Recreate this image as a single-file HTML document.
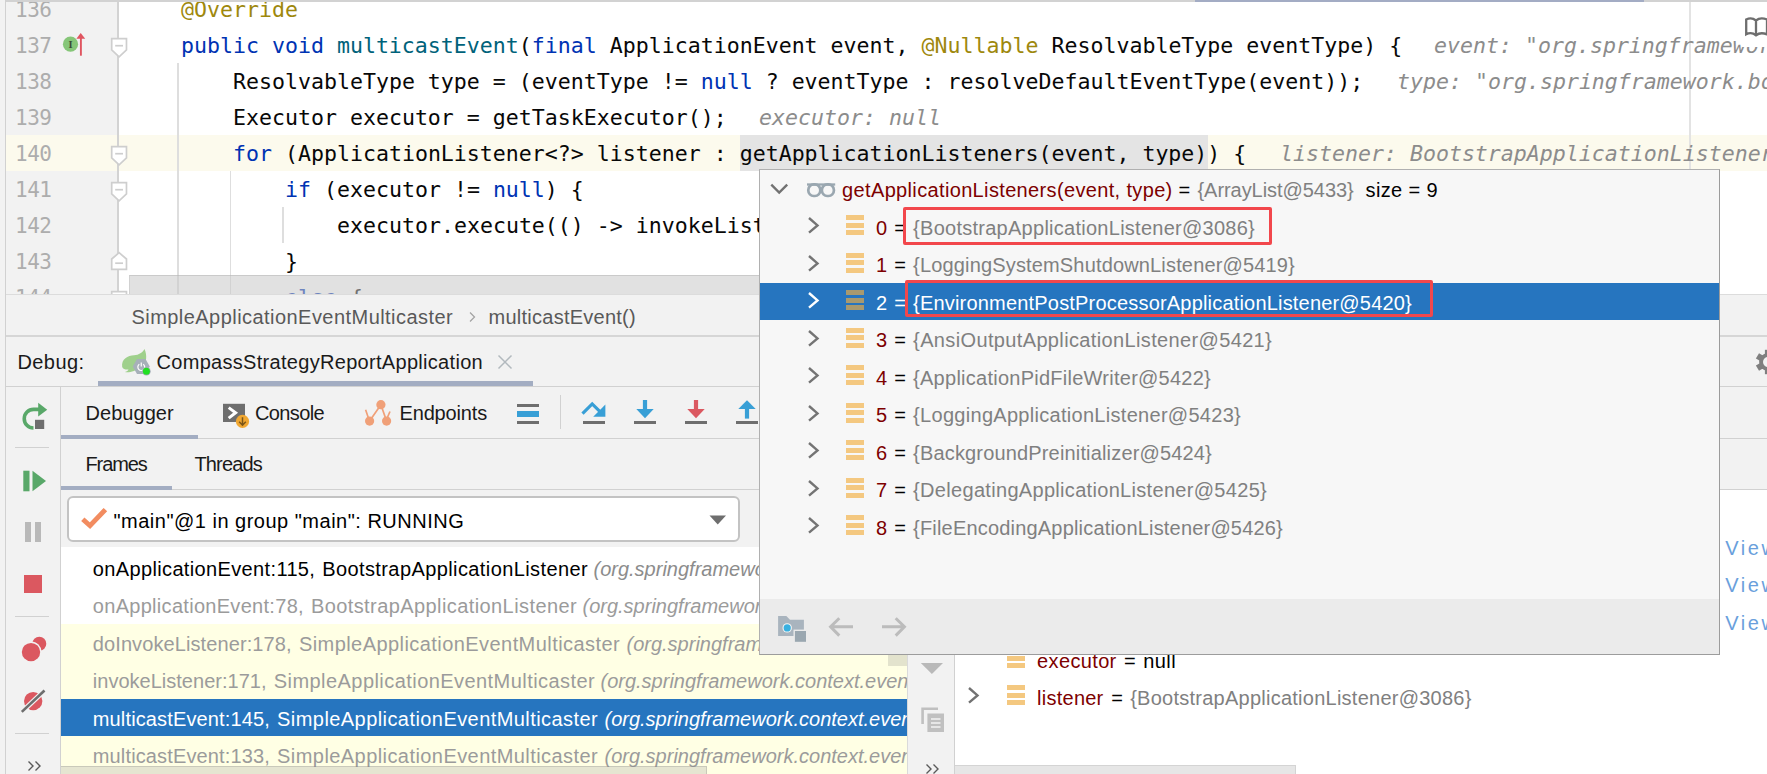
<!DOCTYPE html>
<html><head><meta charset="utf-8"><title>Debug</title>
<style>
html,body{margin:0;padding:0;}
body{width:1767px;height:774px;overflow:hidden;position:relative;background:#f2f2f2;font-family:"Liberation Sans",sans-serif;font-size:20px;color:#000;}
.abs{position:absolute;}
.mono{font-family:"DejaVu Sans Mono","Liberation Mono",monospace;font-size:21.59px;}
#editor{position:absolute;left:0;top:0;width:1767px;height:294px;background:#fff;overflow:hidden;}
.ln{position:absolute;left:0;width:1767px;height:36px;line-height:36px;white-space:pre;}
.ln .no{position:absolute;left:15px;color:#adadad;letter-spacing:-0.5px;font-size:21px;}
.ln .code{position:absolute;color:#080808;}
.ln .k{color:#0033b3;} .ln .m{color:#00627a;} .ln .a{color:#9e880d;} .ln .h{color:#8c8c8c;font-style:italic;}
.ui{position:absolute;white-space:pre;line-height:30px;height:30px;}
.clip{position:absolute;overflow:hidden;}
</style></head><body>
<div id="editor"><div class="abs" style="left:6px;top:0px;width:111px;height:294px;background:#f2f2f2;"></div>
<div class="abs" style="left:6px;top:135px;width:1761px;height:36px;background:#fcfaed;"></div>
<div class="abs" style="left:740px;top:135px;width:468px;height:36px;background:#e4e4e4;"></div>
<div class="abs" style="left:1689px;top:0px;width:2px;height:294px;background:#e3e3e3;"></div>
<div class="abs" style="left:177.3px;top:63px;width:1.5px;height:231px;background:#dedede;"></div>
<div class="abs" style="left:229.9px;top:171px;width:1.5px;height:123px;background:#dedede;"></div>
<div class="abs" style="left:282px;top:207px;width:1.5px;height:36px;background:#dedede;"></div>
<div class="mono">
<div class="ln" style="top:-8.3px"><span class="no">136</span><span class="code" style="left:181px"><span class="a">@Override</span></span></div>
<div class="ln" style="top:27.7px"><span class="no">137</span><span class="code" style="left:181px"><span class="k">public void </span><span class="m">multicastEvent</span>(<span class="k">final</span> ApplicationEvent event, <span class="a">@Nullable</span> ResolvableType eventType) {</span><span class="code h" style="left:1434px">event: "org.springframework.</span></div>
<div class="ln" style="top:63.7px"><span class="no">138</span><span class="code" style="left:233px">ResolvableType type = (eventType != <span class="k">null</span> ? eventType : resolveDefaultEventType(event));</span><span class="code h" style="left:1397px">type: "org.springframework.boot</span></div>
<div class="ln" style="top:99.7px"><span class="no">139</span><span class="code" style="left:233px">Executor executor = getTaskExecutor();</span><span class="code h" style="left:759px">executor: null</span></div>
<div class="ln" style="top:135.7px"><span class="no">140</span><span class="code" style="left:233px"><span class="k">for</span> (ApplicationListener&lt;?&gt; listener : getApplicationListeners(event, type)) {</span><span class="code h" style="left:1280px">listener: BootstrapApplicationListener</span></div>
<div class="ln" style="top:171.7px"><span class="no">141</span><span class="code" style="left:285px"><span class="k">if</span> (executor != <span class="k">null</span>) {</span></div>
<div class="ln" style="top:207.7px"><span class="no">142</span><span class="code" style="left:337px">executor.execute(() -&gt; invokeListener(listener, event));</span></div>
<div class="ln" style="top:243.7px"><span class="no">143</span><span class="code" style="left:285px">}</span></div>
<div class="ln" style="top:279.7px"><span class="no">144</span><span class="code" style="left:285px"><span class="k">else</span> {</span></div>
</div>
<div class="abs" style="left:117px;top:0px;width:2px;height:294px;background:#d3d3d3;"></div>
<svg class="abs" style="left:109.5px;top:37.3px;" width="18.2" height="22" viewBox="0 0 18.2 22"><path d="M1.7 1.7 H16.5 V13 L9.1 19.8 L1.7 13 Z" fill="#fff" stroke="#cecece" stroke-width="1.7"/><path d="M5.2 8.7 H13" stroke="#cecece" stroke-width="1.7"/></svg>
<svg class="abs" style="left:109.5px;top:145.3px;" width="18.2" height="22" viewBox="0 0 18.2 22"><path d="M1.7 1.7 H16.5 V13 L9.1 19.8 L1.7 13 Z" fill="#fff" stroke="#cecece" stroke-width="1.7"/><path d="M5.2 8.7 H13" stroke="#cecece" stroke-width="1.7"/></svg>
<svg class="abs" style="left:109.5px;top:181.3px;" width="18.2" height="22" viewBox="0 0 18.2 22"><path d="M1.7 1.7 H16.5 V13 L9.1 19.8 L1.7 13 Z" fill="#fff" stroke="#cecece" stroke-width="1.7"/><path d="M5.2 8.7 H13" stroke="#cecece" stroke-width="1.7"/></svg>
<svg class="abs" style="left:109.5px;top:251px;" width="18.2" height="22" viewBox="0 0 18.2 22"><path d="M1.7 18.3 H16.5 V8 L9.1 1.7 L1.7 8 Z" fill="#fff" stroke="#cecece" stroke-width="1.7"/><path d="M5.2 12.2 H13" stroke="#cecece" stroke-width="1.7"/></svg>
<svg class="abs" style="left:109.5px;top:290.3px;" width="18.2" height="22" viewBox="0 0 18.2 22"><path d="M1.7 1.7 H16.5 V13 L9.1 19.8 L1.7 13 Z" fill="#fff" stroke="#cecece" stroke-width="1.7"/><path d="M5.2 8.7 H13" stroke="#cecece" stroke-width="1.7"/></svg>
<svg class="abs" style="left:62px;top:32px;" width="26" height="26" viewBox="0 0 26 26"><circle cx="8.5" cy="12.2" r="7.6" fill="#86c678"/><text x="8.5" y="16" font-family="Liberation Serif,serif" font-weight="bold" font-size="10.5" text-anchor="middle" fill="#3a4a37">I</text><path d="M18.9 23.7 V5" stroke="#e05560" stroke-width="1.9" fill="none"/><path d="M18.7 1 L23.2 6.8 H14.4 Z" fill="#e05560"/></svg>
<div class="abs" style="left:1742px;top:2px;width:25px;height:44.5px;background:#fff;"></div>
<svg class="abs" style="left:1744px;top:16px;" width="26" height="23" viewBox="0 0 26 23"><path d="M2.2 3.5 C5 2 9 2 12 4.5 C15 2 19 2 23 3.5 V18.3 C19 16.8 15 16.8 12 19.3 C9 16.8 5 16.8 2.2 18.3 Z M12 4.5 V19.3" fill="none" stroke="#6e6e6e" stroke-width="2.3"/></svg>
<div class="abs" style="left:129px;top:275px;width:1571px;height:19px;background:rgba(200,200,200,0.55);border-top:1px solid rgba(170,170,170,0.4);border-left:1px solid rgba(170,170,170,0.3);box-sizing:border-box;"></div>
<div class="abs" style="left:0px;top:0px;width:1767px;height:2px;background:#d2d2d2;"></div>
<div class="abs" style="left:1195px;top:0px;width:449px;height:2px;background:#a3acc4;"></div></div>
<div class="abs" style="left:0px;top:0px;width:5px;height:774px;background:#f2f2f2;"></div>
<div class="abs" style="left:5px;top:0px;width:1px;height:774px;background:#d1d1d1;"></div>
<div class="abs" style="left:6px;top:294px;width:1761px;height:1px;background:#dcdcdc;"></div>
<span class="ui" style="left:131.50px;top:301.57px;color:#595959;font-size:20px;letter-spacing:0.450px;">SimpleApplicationEventMulticaster</span>
<svg class="abs" style="left:466px;top:309px;" width="12" height="16" viewBox="0 0 12 16"><path d="M4 3.5 L8.5 8 L4 12.5" fill="none" stroke="#a4a4a4" stroke-width="1.3"/></svg>
<span class="ui" style="left:488.50px;top:301.57px;color:#595959;font-size:20px;letter-spacing:0.255px;">multicastEvent()</span>
<div class="abs" style="left:6px;top:335.1px;width:1761px;height:1.6px;background:#d6d6d6;"></div>
<span class="ui" style="left:17.50px;top:346.57px;color:#1a1a1a;font-size:20px;letter-spacing:0.400px;">Debug:</span>
<svg class="abs" style="left:120px;top:347px;" width="34" height="31" viewBox="0 0 34 31"><path d="M2.2 20 C1 12 8 8.5 14 8.3 C19 8 22.5 5.5 24.5 2 C27.5 9 26 15 24 18 L14 24 C10 25.5 6.5 25.5 5 25 C7 24.5 8 23.5 8.5 22.5 C5.5 22.8 3 22 2.2 20 Z" fill="#9fd08c"/><path d="M17 12 L25.5 12 L29.8 19.5 L25.5 27 L17 27 L12.7 19.5 Z" fill="#a7b0b9"/><path d="M19.3 17.3 A3.4 3.4 0 1 0 23.2 17.3" fill="none" stroke="#fff" stroke-width="1.2"/><path d="M21.25 15.6 V19.6" stroke="#fff" stroke-width="1.2"/><circle cx="26.4" cy="24.3" r="4.3" fill="#a7b0b9"/><circle cx="26.4" cy="24.3" r="3.5" fill="#22e022"/></svg>
<span class="ui" style="left:156.50px;top:346.57px;color:#1a1a1a;font-size:20px;letter-spacing:0.302px;">CompassStrategyReportApplication</span>
<svg class="abs" style="left:496px;top:353px;" width="18" height="18" viewBox="0 0 18 18"><path d="M2.5 2.5 L15.5 15.5 M15.5 2.5 L2.5 15.5" stroke="#b2b9be" stroke-width="1.5"/></svg>
<div class="abs" style="left:98px;top:381px;width:435px;height:5.5px;background:#a3adc2;"></div>
<div class="abs" style="left:6px;top:386px;width:1761px;height:1px;background:#d1d1d1;"></div>
<svg class="abs" style="left:1753.5px;top:348px;" width="28" height="28" viewBox="0 0 28 28"><g transform="translate(14,14)" fill="#7f7f7f"><rect x="-3.1" y="-12.2" width="6.2" height="7" transform="rotate(0)"/><rect x="-3.1" y="-12.2" width="6.2" height="7" transform="rotate(60)"/><rect x="-3.1" y="-12.2" width="6.2" height="7" transform="rotate(120)"/><rect x="-3.1" y="-12.2" width="6.2" height="7" transform="rotate(180)"/><rect x="-3.1" y="-12.2" width="6.2" height="7" transform="rotate(240)"/><rect x="-3.1" y="-12.2" width="6.2" height="7" transform="rotate(300)"/><circle r="8.9"/><circle r="5" fill="#f2f2f2"/></g></svg>
<div class="abs" style="left:60px;top:387px;width:1px;height:387px;background:#d1d1d1;"></div>
<svg class="abs" style="left:20px;top:401px;" width="30" height="30" viewBox="0 0 30 30"><path d="M13.5 27 A9.3 9.3 0 1 1 13.6 8.4 H20" fill="none" stroke="#59a869" stroke-width="3.6"/><path d="M18.2 1.8 L27.2 8.8 L18.2 15.6 Z" fill="#59a869"/><rect x="15" y="18.8" width="9.2" height="9.2" fill="#6e6e6e"/></svg>
<div class="abs" style="left:15px;top:447px;width:34px;height:1px;background:#d1d1d1;"></div>
<svg class="abs" style="left:22px;top:469px;" width="26" height="24" viewBox="0 0 26 24"><rect x="1.3" y="1.7" width="6.2" height="20.6" fill="#59a869"/><path d="M10.5 1.7 L24 12 L10.5 22.3 Z" fill="#59a869"/></svg>
<div class="abs" style="left:25.3px;top:522px;width:5.7px;height:20px;background:#b9b9b9;"></div>
<div class="abs" style="left:35px;top:522px;width:5.7px;height:20px;background:#b9b9b9;"></div>
<div class="abs" style="left:23.5px;top:574.5px;width:18.8px;height:18.8px;background:#db5860;"></div>
<div class="abs" style="left:15px;top:615.5px;width:34px;height:1px;background:#d1d1d1;"></div>
<svg class="abs" style="left:20px;top:635px;" width="28" height="28" viewBox="0 0 28 28"><circle cx="19.3" cy="8.7" r="7" fill="#db5860"/><circle cx="11" cy="17.1" r="10.6" fill="#f2f2f2"/><circle cx="11" cy="17.1" r="9.2" fill="#db5860"/></svg>
<svg class="abs" style="left:20px;top:688px;" width="28" height="28" viewBox="0 0 28 28"><circle cx="13.2" cy="13.1" r="9.2" fill="#db5860"/><path d="M1.5 24.2 L24.8 2.2" stroke="#f2f2f2" stroke-width="5"/><path d="M1.8 23.9 L24.5 2.5" stroke="#6e6e6e" stroke-width="2.6"/></svg>
<div class="abs" style="left:15px;top:732.5px;width:34px;height:1px;background:#d1d1d1;"></div>
<svg class="abs" style="left:26px;top:759px;" width="18" height="14" viewBox="0 0 18 14"><path d="M2.5 2.5 L7 7 L2.5 11.5 M9.5 2.5 L14 7 L9.5 11.5" fill="none" stroke="#5a5a5a" stroke-width="1.4"/></svg>
<span class="ui" style="left:85.50px;top:398.07px;color:#1a1a1a;font-size:20px;letter-spacing:0.051px;">Debugger</span>
<div class="abs" style="left:61px;top:438.3px;width:1706px;height:1px;background:#d1d1d1;"></div>
<div class="abs" style="left:61px;top:435px;width:137px;height:3.7px;background:#a3adc2;"></div>
<svg class="abs" style="left:222px;top:402px;" width="28" height="28" viewBox="0 0 28 28"><rect x="1" y="1.8" width="22" height="18.2" fill="#6e6e6e"/><path d="M6.7 5.6 L13.6 10.7 L6.7 16.2" fill="none" stroke="#fff" stroke-width="3"/><circle cx="20.5" cy="19.4" r="6.6" fill="#f0a732"/><path d="M20.5 15.2 V23 M17.2 19.8 L20.5 23.2 L23.8 19.8" fill="none" stroke="#7a5518" stroke-width="1.5"/></svg>
<span class="ui" style="left:255.00px;top:398.07px;color:#1a1a1a;font-size:20px;letter-spacing:-0.615px;">Console</span>
<svg class="abs" style="left:362px;top:398px;" width="32" height="30" viewBox="0 0 32 30"><g fill="#f0a078" stroke="#f0a078"><circle cx="18.9" cy="6.7" r="4.6" stroke="none"/><circle cx="7.6" cy="23.1" r="4.6" stroke="none"/><circle cx="24.6" cy="23.1" r="4.6" stroke="none"/><path d="M18.9 6.7 L7.6 23.1 M18.9 6.7 L24.6 23.1 M3.6 11.8 L6.5 20.3 M28 13.5 L25 20.3" fill="none" stroke-width="1.7"/></g></svg>
<span class="ui" style="left:399.50px;top:398.07px;color:#1a1a1a;font-size:20px;letter-spacing:-0.159px;">Endpoints</span>
<div class="abs" style="left:516.8px;top:403.8px;width:22.3px;height:3.3px;background:#6e6e6e;"></div>
<div class="abs" style="left:516.8px;top:411.4px;width:22.3px;height:5.3px;background:#389fd6;"></div>
<div class="abs" style="left:516.8px;top:420.6px;width:22.3px;height:3.3px;background:#6e6e6e;"></div>
<div class="abs" style="left:559.5px;top:395.3px;width:1px;height:33.4px;background:#d1d1d1;"></div>
<div class="abs" style="left:583px;top:420.6px;width:22.1px;height:3.3px;background:#6e6e6e;"></div>
<svg class="abs" style="left:578px;top:398px;" width="32" height="22" viewBox="0 0 32 22"><path d="M4.5 15.6 L14.2 5.9 L23 14.7" fill="none" stroke="#389fd6" stroke-width="3.2"/><path d="M15.2 18.7 H27.4 V6.6 Z" fill="#389fd6"/></svg>
<div class="abs" style="left:633.9px;top:420.6px;width:22.1px;height:3.3px;background:#6e6e6e;"></div><svg class="abs" style="left:634.9px;top:399px;" width="20" height="21" viewBox="0 0 20 21"><rect x="7.9" y="1" width="4.2" height="10" fill="#389fd6"/><path d="M1.3 10 H18.7 L10 19.3 Z" fill="#389fd6"/></svg>
<div class="abs" style="left:685px;top:420.6px;width:22.1px;height:3.3px;background:#6e6e6e;"></div><svg class="abs" style="left:686px;top:399px;" width="20" height="21" viewBox="0 0 20 21"><rect x="7.9" y="1" width="4.2" height="10" fill="#db5860"/><path d="M1.3 10 H18.7 L10 19.3 Z" fill="#db5860"/></svg>
<div class="abs" style="left:736px;top:420.6px;width:22.1px;height:3.3px;background:#6e6e6e;"></div>
<svg class="abs" style="left:737px;top:399px;" width="20" height="21" viewBox="0 0 20 21"><rect x="7.9" y="9" width="4.2" height="10.6" fill="#389fd6"/><path d="M1.3 10.1 H18.7 L10 1.3 Z" fill="#389fd6"/></svg>
<span class="ui" style="left:85.50px;top:448.87px;color:#1a1a1a;font-size:20px;letter-spacing:-1.119px;">Frames</span>
<span class="ui" style="left:194.50px;top:448.87px;color:#1a1a1a;font-size:20px;letter-spacing:-0.862px;">Threads</span>
<div class="abs" style="left:61px;top:489.4px;width:1706px;height:1px;background:#d1d1d1;"></div>
<div class="abs" style="left:61px;top:486.3px;width:111px;height:3.4px;background:#a3adc2;"></div>
<div class="abs" style="left:66.8px;top:495.8px;width:673px;height:46.2px;box-sizing:border-box;background:#fff;border:2px solid #c3c3c3;border-radius:6px;"></div>
<svg class="abs" style="left:80px;top:506px;" width="30" height="26" viewBox="0 0 30 26"><path d="M2.8 13.2 L10 19.7 L25.4 3.6" fill="none" stroke="#f28c60" stroke-width="4.9"/></svg>
<span class="ui" style="left:113.50px;top:505.57px;color:#000;font-size:20px;letter-spacing:0.495px;">"main"@1 in group "main": RUNNING</span>
<svg class="abs" style="left:708px;top:514px;" width="20" height="12" viewBox="0 0 20 12"><path d="M1.5 1.5 H18 L9.75 10.5 Z" fill="#6e6e6e"/></svg>
<div class="clip" style="left:61px;top:547px;width:846px;height:227px;"><div class="abs" style="left:0px;top:0px;width:846px;height:77px;background:#fff;"></div><div class="abs" style="left:0px;top:77px;width:846px;height:150px;background:#ffffe4;"></div><div class="abs" style="left:0px;top:152.3px;width:846px;height:36.4px;background:#2675bf;"></div><span class="ui" style="left:31.80px;top:6.87px;color:#000;font-size:20px;letter-spacing:0.358px;">onApplicationEvent:115,</span><span class="ui" style="left:261.20px;top:6.87px;color:#000;font-size:20px;letter-spacing:0.403px;">BootstrapApplicationListener</span><span class="ui" style="left:532.50px;top:6.87px;color:#8c8c8c;font-size:20px;font-style:italic;">(org.springframework.cloud.bootstrap)</span><span class="ui" style="left:31.80px;top:44.37px;color:#9b9b9b;font-size:20px;letter-spacing:0.296px;">onApplicationEvent:78,</span><span class="ui" style="left:249.90px;top:44.37px;color:#9b9b9b;font-size:20px;letter-spacing:0.414px;">BootstrapApplicationListener</span><span class="ui" style="left:521.50px;top:44.37px;color:#9b9b9b;font-size:20px;font-style:italic;">(org.springframework.cloud.bootstrap)</span><span class="ui" style="left:31.80px;top:81.87px;color:#9b9b9b;font-size:20px;letter-spacing:0.099px;">doInvokeListener:178,</span><span class="ui" style="left:237.90px;top:81.87px;color:#9b9b9b;font-size:20px;letter-spacing:0.437px;">SimpleApplicationEventMulticaster</span><span class="ui" style="left:565.50px;top:81.87px;color:#9b9b9b;font-size:20px;font-style:italic;">(org.springframework.context.event)</span><span class="ui" style="left:31.80px;top:119.37px;color:#9b9b9b;font-size:20px;letter-spacing:0.014px;">invokeListener:171,</span><span class="ui" style="left:212.80px;top:119.37px;color:#9b9b9b;font-size:20px;letter-spacing:0.440px;">SimpleApplicationEventMulticaster</span><span class="ui" style="left:539.50px;top:119.37px;color:#9b9b9b;font-size:20px;font-style:italic;">(org.springframework.context.event)</span><span class="ui" style="left:31.80px;top:156.87px;color:#fff;font-size:20px;letter-spacing:0.137px;">multicastEvent:145,</span><span class="ui" style="left:216.10px;top:156.87px;color:#fff;font-size:20px;letter-spacing:0.431px;">SimpleApplicationEventMulticaster</span><span class="ui" style="left:543.50px;top:156.87px;color:#fff;font-size:20px;font-style:italic;">(org.springframework.context.event)</span><span class="ui" style="left:31.80px;top:194.37px;color:#9b9b9b;font-size:20px;letter-spacing:0.137px;">multicastEvent:133,</span><span class="ui" style="left:216.10px;top:194.37px;color:#9b9b9b;font-size:20px;letter-spacing:0.431px;">SimpleApplicationEventMulticaster</span><span class="ui" style="left:543.50px;top:194.37px;color:#9b9b9b;font-size:20px;font-style:italic;">(org.springframework.context.event)</span><div class="abs" style="left:0;top:218.6px;width:646px;height:9px;background:rgba(150,150,150,0.25);border-top:1px solid rgba(120,120,120,0.25);border-right:1px solid rgba(120,120,120,0.25);box-sizing:border-box"></div><div class="abs" style="left:827px;top:107px;width:19px;height:12px;background:#e3e3cd;"></div></div>
<div class="abs" style="left:907px;top:547px;width:48px;height:227px;background:#f2f2f2;"></div>
<div class="abs" style="left:907px;top:547px;width:1.2px;height:227px;background:#dadada;"></div>
<div class="abs" style="left:954px;top:489px;width:1px;height:285px;background:#d1d1d1;"></div>
<svg class="abs" style="left:919px;top:661px;" width="26" height="15" viewBox="0 0 26 15"><path d="M1.8 2.1 H24 L12.9 13 Z" fill="#b9b9b9"/></svg>
<svg class="abs" style="left:920.3px;top:705.5px;" width="26" height="28" viewBox="0 0 26 28"><path d="M2.6 18 V2.7 H18" fill="none" stroke="#c0c0c0" stroke-width="2.6"/><rect x="7.4" y="7.5" width="16.6" height="18.5" fill="#c0c0c0"/><path d="M11 13 H20.5 M11 17 H20.5 M11 21 H20.5" stroke="#f2f2f2" stroke-width="1.6"/></svg>
<svg class="abs" style="left:924px;top:762px;" width="18" height="14" viewBox="0 0 18 14"><path d="M2.5 2.5 L7 7 L2.5 11.5 M9.5 2.5 L14 7 L9.5 11.5" fill="none" stroke="#5a5a5a" stroke-width="1.4"/></svg>
<div class="abs" style="left:955px;top:490px;width:812px;height:284px;background:#fff;"></div>
<div class="abs" style="left:1006.8px;top:648.1px;width:18.7px;height:5px;background:#f4c880;"></div><div class="abs" style="left:1006.8px;top:655.7px;width:18.7px;height:5.1px;background:#f4c880;"></div><div class="abs" style="left:1006.8px;top:663.4px;width:18.7px;height:5px;background:#f4c880;"></div>
<span class="ui" style="left:1037.10px;top:646.07px;color:#7d0000;font-size:20px;letter-spacing:0.354px;">executor</span>
<span class="ui" style="left:1124.00px;top:646.07px;color:#000;font-size:20px;">=</span>
<span class="ui" style="left:1143.20px;top:646.07px;color:#000;font-size:20px;letter-spacing:0.453px;">null</span>
<svg class="abs" style="left:966px;top:685px;" width="16" height="22" viewBox="0 0 16 22"><path d="M3 3 L11.5 10.4 L3 17.7" fill="none" stroke="#727272" stroke-width="2.4"/></svg>
<div class="abs" style="left:1006.8px;top:685.1px;width:18.7px;height:5px;background:#f4c880;"></div><div class="abs" style="left:1006.8px;top:692.7px;width:18.7px;height:5.1px;background:#f4c880;"></div><div class="abs" style="left:1006.8px;top:700.4px;width:18.7px;height:5px;background:#f4c880;"></div>
<span class="ui" style="left:1037.10px;top:683.07px;color:#7d0000;font-size:20px;letter-spacing:0.245px;">listener</span>
<span class="ui" style="left:1111.30px;top:683.07px;color:#000;font-size:20px;">=</span>
<span class="ui" style="left:1130.20px;top:683.07px;color:#808080;font-size:20px;letter-spacing:0.248px;">{BootstrapApplicationListener@3086}</span>
<span class="ui" style="left:1725.20px;top:532.57px;color:#6a9fdc;font-size:20px;letter-spacing:2.584px;">View</span>
<span class="ui" style="left:1725.20px;top:570.27px;color:#6a9fdc;font-size:20px;letter-spacing:2.584px;">View</span>
<span class="ui" style="left:1725.20px;top:607.77px;color:#6a9fdc;font-size:20px;letter-spacing:2.584px;">View</span>
<div class="abs" style="left:955px;top:765px;width:340px;height:9px;background:#e6e6e6;"></div>
<div class="abs" style="left:955px;top:765px;width:340px;height:1px;background:#d4d4d4;"></div>
<div class="abs" style="left:1295px;top:765px;width:1px;height:9px;background:#d4d4d4;"></div>
<div class="clip" style="left:759px;top:169px;width:961px;height:485.5px;box-sizing:border-box;background:#f7f7f7;border:1px solid #b0b0b0;border-right:1.3px solid #9c9c9c;border-bottom:1.5px solid #9c9c9c;"><div class="abs" style="left:0px;top:113px;width:959px;height:37px;background:#2675bf;"></div><div class="abs" style="left:0px;top:429px;width:959px;height:55px;background:#ebebeb;"></div><svg class="abs" style="left:8px;top:11px;" width="24" height="16" viewBox="0 0 24 16"><path d="M3.3 3.7 L11.2 11.6 L19.2 3.7" fill="none" stroke="#727272" stroke-width="2.4"/></svg><svg class="abs" style="left:44px;top:11px;" width="34" height="18" viewBox="0 0 34 18"><g fill="none" stroke="#9aa7b0" stroke-width="2.7"><rect x="4.3" y="3.4" width="12" height="11.6" rx="5.4" ry="5.6"/><rect x="17.9" y="3.4" width="12" height="11.6" rx="5.4" ry="5.6"/><path d="M3 3.5 H31.2" stroke-width="2.3"/></g></svg><span class="ui" style="left:82.10px;top:5.27px;color:#7d0000;font-size:20px;letter-spacing:0.349px;">getApplicationListeners(event, type)</span><span class="ui" style="left:418.50px;top:5.27px;color:#000;font-size:20px;">=</span><span class="ui" style="left:437.50px;top:5.27px;color:#808080;font-size:20px;letter-spacing:-0.058px;">{ArrayList@5433}</span><span class="ui" style="left:605.50px;top:5.27px;color:#000;font-size:20px;letter-spacing:0.388px;">size = 9</span><svg class="abs" style="left:45.7px;top:45.1px;" width="16" height="22" viewBox="0 0 16 22"><path d="M3 3 L11.5 10.4 L3 17.7" fill="none" stroke="#747474" stroke-width="2.4"/></svg><div class="abs" style="left:85.7px;top:45px;width:18.7px;height:5px;background:#f4c880;"></div><div class="abs" style="left:85.7px;top:52.6px;width:18.7px;height:5.1px;background:#f4c880;"></div><div class="abs" style="left:85.7px;top:60.3px;width:18.7px;height:5px;background:#f4c880;"></div><span class="ui" style="left:116.10px;top:42.57px;color:#7d0000;font-size:20px;">0</span><span class="ui" style="left:134.20px;top:42.57px;color:#000;font-size:20px;">=</span><span class="ui" style="left:153.10px;top:42.57px;color:#808080;font-size:20px;letter-spacing:0.263px;">{BootstrapApplicationListener@3086}</span><svg class="abs" style="left:45.7px;top:82.6px;" width="16" height="22" viewBox="0 0 16 22"><path d="M3 3 L11.5 10.4 L3 17.7" fill="none" stroke="#747474" stroke-width="2.4"/></svg><div class="abs" style="left:85.7px;top:82.5px;width:18.7px;height:5px;background:#f4c880;"></div><div class="abs" style="left:85.7px;top:90.1px;width:18.7px;height:5.1px;background:#f4c880;"></div><div class="abs" style="left:85.7px;top:97.8px;width:18.7px;height:5px;background:#f4c880;"></div><span class="ui" style="left:116.10px;top:80.07px;color:#7d0000;font-size:20px;">1</span><span class="ui" style="left:134.20px;top:80.07px;color:#000;font-size:20px;">=</span><span class="ui" style="left:153.10px;top:80.07px;color:#808080;font-size:20px;letter-spacing:0.159px;">{LoggingSystemShutdownListener@5419}</span><svg class="abs" style="left:45.7px;top:120.1px;" width="16" height="22" viewBox="0 0 16 22"><path d="M3 3 L11.5 10.4 L3 17.7" fill="none" stroke="#fff" stroke-width="2.4"/></svg><div class="abs" style="left:85.7px;top:120px;width:18.7px;height:5px;background:#a8996e;"></div><div class="abs" style="left:85.7px;top:127.6px;width:18.7px;height:5.1px;background:#a8996e;"></div><div class="abs" style="left:85.7px;top:135.3px;width:18.7px;height:5px;background:#a8996e;"></div><span class="ui" style="left:116.10px;top:117.57px;color:#fff;font-size:20px;">2</span><span class="ui" style="left:134.20px;top:117.57px;color:#fff;font-size:20px;">=</span><span class="ui" style="left:153.10px;top:117.57px;color:#fff;font-size:20px;letter-spacing:0.188px;">{EnvironmentPostProcessorApplicationListener@5420}</span><svg class="abs" style="left:45.7px;top:157.6px;" width="16" height="22" viewBox="0 0 16 22"><path d="M3 3 L11.5 10.4 L3 17.7" fill="none" stroke="#747474" stroke-width="2.4"/></svg><div class="abs" style="left:85.7px;top:157.5px;width:18.7px;height:5px;background:#f4c880;"></div><div class="abs" style="left:85.7px;top:165.1px;width:18.7px;height:5.1px;background:#f4c880;"></div><div class="abs" style="left:85.7px;top:172.8px;width:18.7px;height:5px;background:#f4c880;"></div><span class="ui" style="left:116.10px;top:155.07px;color:#7d0000;font-size:20px;">3</span><span class="ui" style="left:134.20px;top:155.07px;color:#000;font-size:20px;">=</span><span class="ui" style="left:153.10px;top:155.07px;color:#808080;font-size:20px;letter-spacing:0.360px;">{AnsiOutputApplicationListener@5421}</span><svg class="abs" style="left:45.7px;top:195.1px;" width="16" height="22" viewBox="0 0 16 22"><path d="M3 3 L11.5 10.4 L3 17.7" fill="none" stroke="#747474" stroke-width="2.4"/></svg><div class="abs" style="left:85.7px;top:195px;width:18.7px;height:5px;background:#f4c880;"></div><div class="abs" style="left:85.7px;top:202.6px;width:18.7px;height:5.1px;background:#f4c880;"></div><div class="abs" style="left:85.7px;top:210.3px;width:18.7px;height:5px;background:#f4c880;"></div><span class="ui" style="left:116.10px;top:192.57px;color:#7d0000;font-size:20px;">4</span><span class="ui" style="left:134.20px;top:192.57px;color:#000;font-size:20px;">=</span><span class="ui" style="left:153.10px;top:192.57px;color:#808080;font-size:20px;letter-spacing:0.254px;">{ApplicationPidFileWriter@5422}</span><svg class="abs" style="left:45.7px;top:232.6px;" width="16" height="22" viewBox="0 0 16 22"><path d="M3 3 L11.5 10.4 L3 17.7" fill="none" stroke="#747474" stroke-width="2.4"/></svg><div class="abs" style="left:85.7px;top:232.5px;width:18.7px;height:5px;background:#f4c880;"></div><div class="abs" style="left:85.7px;top:240.1px;width:18.7px;height:5.1px;background:#f4c880;"></div><div class="abs" style="left:85.7px;top:247.8px;width:18.7px;height:5px;background:#f4c880;"></div><span class="ui" style="left:116.10px;top:230.07px;color:#7d0000;font-size:20px;">5</span><span class="ui" style="left:134.20px;top:230.07px;color:#000;font-size:20px;">=</span><span class="ui" style="left:153.10px;top:230.07px;color:#808080;font-size:20px;letter-spacing:0.292px;">{LoggingApplicationListener@5423}</span><svg class="abs" style="left:45.7px;top:270.1px;" width="16" height="22" viewBox="0 0 16 22"><path d="M3 3 L11.5 10.4 L3 17.7" fill="none" stroke="#747474" stroke-width="2.4"/></svg><div class="abs" style="left:85.7px;top:270px;width:18.7px;height:5px;background:#f4c880;"></div><div class="abs" style="left:85.7px;top:277.6px;width:18.7px;height:5.1px;background:#f4c880;"></div><div class="abs" style="left:85.7px;top:285.3px;width:18.7px;height:5px;background:#f4c880;"></div><span class="ui" style="left:116.10px;top:267.57px;color:#7d0000;font-size:20px;">6</span><span class="ui" style="left:134.20px;top:267.57px;color:#000;font-size:20px;">=</span><span class="ui" style="left:153.10px;top:267.57px;color:#808080;font-size:20px;letter-spacing:0.162px;">{BackgroundPreinitializer@5424}</span><svg class="abs" style="left:45.7px;top:307.6px;" width="16" height="22" viewBox="0 0 16 22"><path d="M3 3 L11.5 10.4 L3 17.7" fill="none" stroke="#747474" stroke-width="2.4"/></svg><div class="abs" style="left:85.7px;top:307.5px;width:18.7px;height:5px;background:#f4c880;"></div><div class="abs" style="left:85.7px;top:315.1px;width:18.7px;height:5.1px;background:#f4c880;"></div><div class="abs" style="left:85.7px;top:322.8px;width:18.7px;height:5px;background:#f4c880;"></div><span class="ui" style="left:116.10px;top:305.07px;color:#7d0000;font-size:20px;">7</span><span class="ui" style="left:134.20px;top:305.07px;color:#000;font-size:20px;">=</span><span class="ui" style="left:153.10px;top:305.07px;color:#808080;font-size:20px;letter-spacing:0.312px;">{DelegatingApplicationListener@5425}</span><svg class="abs" style="left:45.7px;top:345.1px;" width="16" height="22" viewBox="0 0 16 22"><path d="M3 3 L11.5 10.4 L3 17.7" fill="none" stroke="#747474" stroke-width="2.4"/></svg><div class="abs" style="left:85.7px;top:345px;width:18.7px;height:5px;background:#f4c880;"></div><div class="abs" style="left:85.7px;top:352.6px;width:18.7px;height:5.1px;background:#f4c880;"></div><div class="abs" style="left:85.7px;top:360.3px;width:18.7px;height:5px;background:#f4c880;"></div><span class="ui" style="left:116.10px;top:342.57px;color:#7d0000;font-size:20px;">8</span><span class="ui" style="left:134.20px;top:342.57px;color:#000;font-size:20px;">=</span><span class="ui" style="left:153.10px;top:342.57px;color:#808080;font-size:20px;letter-spacing:0.187px;">{FileEncodingApplicationListener@5426}</span><div class="abs" style="left:143px;top:37px;width:368.5px;height:37.7px;box-sizing:border-box;border:3px solid #f2474c;border-radius:2px;"></div><div class="abs" style="left:144.5px;top:109.5px;width:528px;height:37.5px;box-sizing:border-box;border:3px solid #f2474c;border-radius:2px;"></div><svg class="abs" style="left:16px;top:444px;" width="32" height="30" viewBox="0 0 32 30"><path d="M2.1 2 H10.3 L14 5.7 H27.9 V22 H2.1 Z" fill="#a9b4be"/><rect x="17.5" y="15.6" width="14" height="14" fill="#ebebeb"/><rect x="18.9" y="17" width="11.1" height="10.8" fill="#9aa7b0"/><circle cx="11.2" cy="13.9" r="4.7" fill="#f4f4f4"/><circle cx="11.2" cy="13.9" r="3.6" fill="#38b0e0"/></svg><svg class="abs" style="left:67px;top:445px;" width="28" height="24" viewBox="0 0 28 24"><path d="M26 11.8 H4 M12.3 3.3 L3.6 11.8 L12.3 20.6" fill="none" stroke="#bcbcbc" stroke-width="3"/></svg><svg class="abs" style="left:120px;top:445px;" width="28" height="24" viewBox="0 0 28 24"><path d="M2 11.8 H24 M15.7 3.3 L24.4 11.8 L15.7 20.6" fill="none" stroke="#bcbcbc" stroke-width="3"/></svg></div>
</body></html>
